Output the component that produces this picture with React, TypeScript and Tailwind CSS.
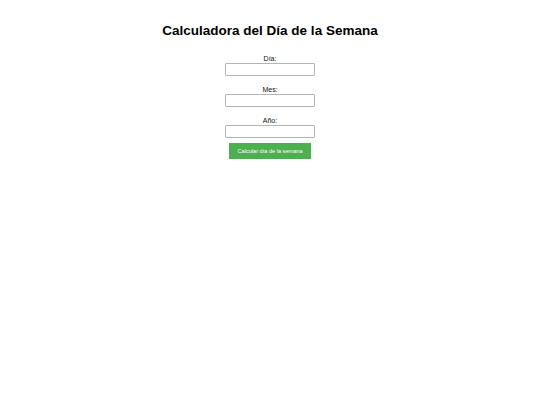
export default function App() {
  const fields = ["Día:", "Mes:", "Año:"];

  return (
    <div className="min-h-[405px] w-full bg-white pt-[23px] text-center font-['Liberation_Sans',Arial,sans-serif] text-black">
      <h1 className="text-[13.5px] font-bold leading-[15.5px]">Calculadora del Día de la Semana</h1>

      <form className="mt-[16.5px] flex flex-col items-center" onSubmit={(e) => e.preventDefault()}>
        {fields.map((label, i) => (
          <div key={label} className={`flex flex-col items-center ${i < 2 ? "mb-[10px]" : "mb-[5px]"}`}>
            <label className="text-[7px] leading-[8px] text-[#111]">{label}</label>
            <input
              type="text"
              className="h-[13px] w-[90px] rounded-[1px] border border-[#b5b5b5] bg-white outline-none"
            />
          </div>
        ))}
        <button
          type="submit"
          className="h-[16px] w-[82px] bg-[#4caf50] text-[5.6px] leading-[16px] text-white"
        >
          Calcular día de la semana
        </button>
      </form>
    </div>
  );
}
